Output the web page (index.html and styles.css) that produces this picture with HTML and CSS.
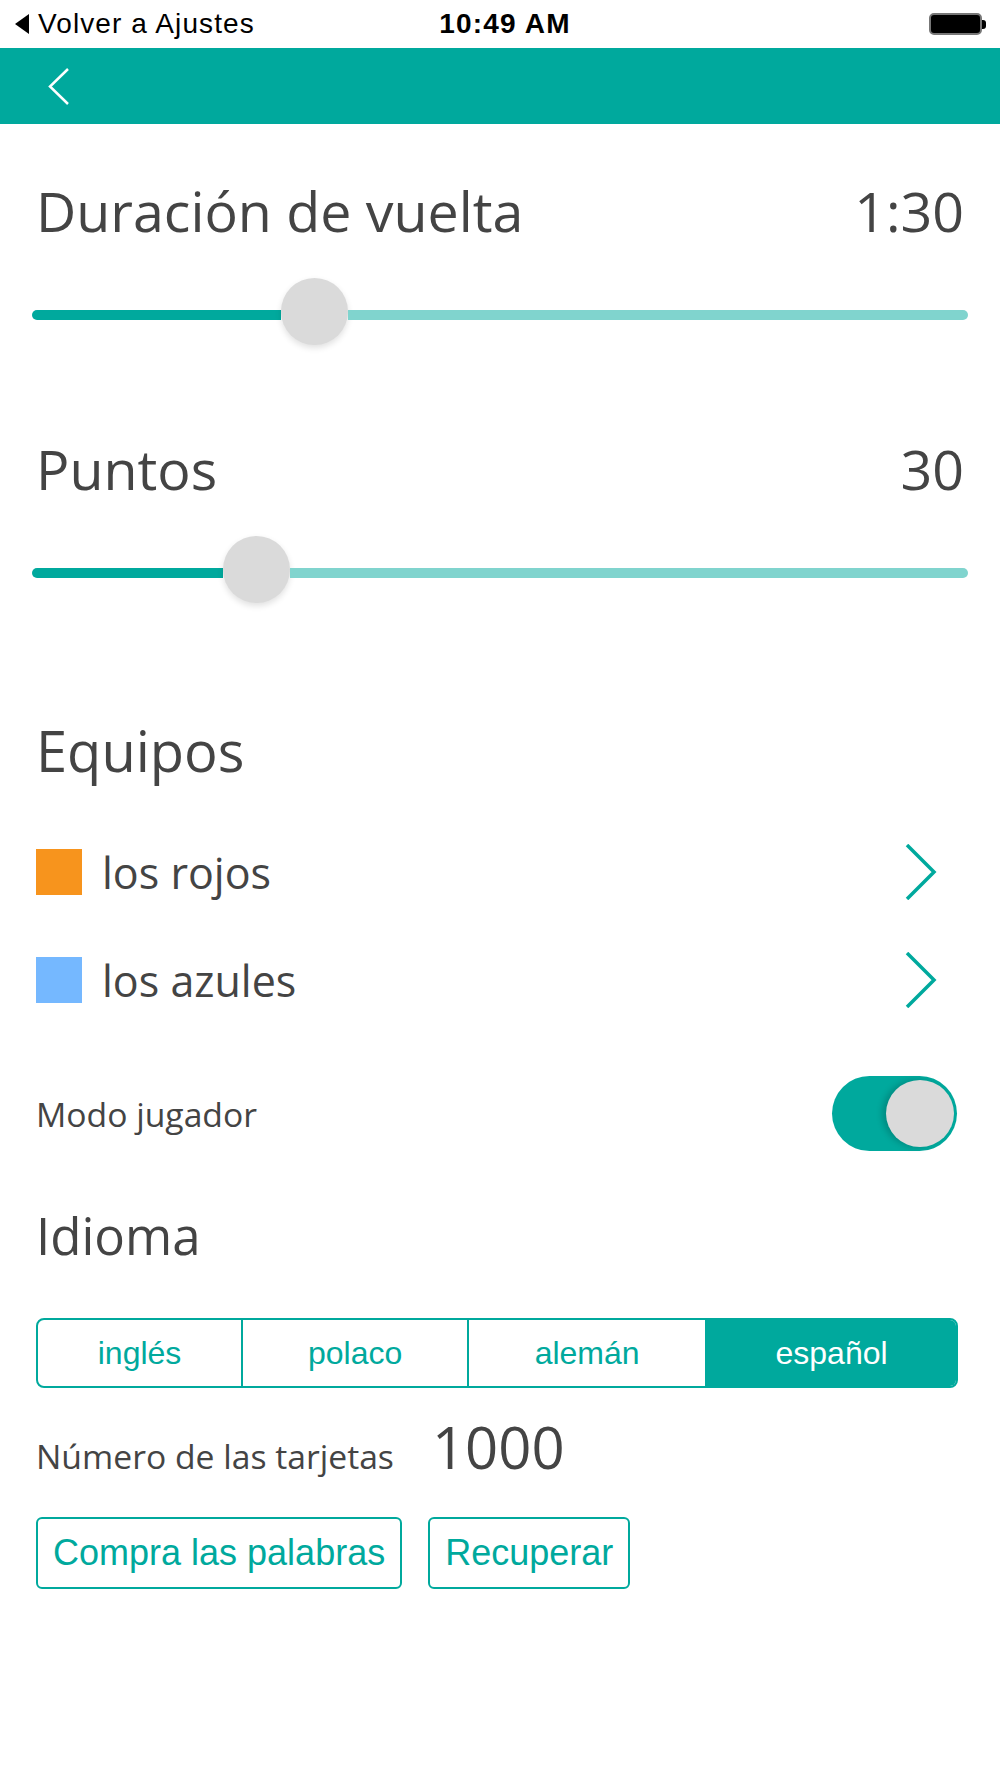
FILE: index.html
```html
<!DOCTYPE html>
<html lang="es">
<head>
  <meta charset="UTF-8">
  <title>Ajustes del juego</title>
  <meta name="viewport" content="width=device-width, initial-scale=1">
  <link rel="stylesheet" href="styles.css">
</head>
<body>
  <div class="statusbar">
    <div class="status-back">
      <svg class="status-tri" width="14" height="20" viewBox="0 0 14 20"><polygon points="14,0 14,20 0,10" fill="#000"/></svg>
      <span>Volver a Ajustes</span>
    </div>
    <div class="status-time">10:49 AM</div>
    <div class="status-right">
      <div class="battery"><div class="battery-body"></div><div class="battery-nub"></div></div>
    </div>
  </div>

  <div class="navbar">
    <svg width="22" height="37" viewBox="0 0 22 37"><polyline points="20,1 2,18.5 20,36" fill="none" stroke="#fff" stroke-width="2.5"/></svg>
  </div>

  <div class="content">
    <div class="setting">
      <div class="setting-head">
        <span>Duración de vuelta</span>
        <span>1:30</span>
      </div>
      <div class="slider">
        <div class="slider-fill" style="width:249px"></div>
        <div class="slider-knob"></div>
        <div class="slider-rest"></div>
      </div>
    </div>

    <div class="setting setting-second">
      <div class="setting-head">
        <span>Puntos</span>
        <span>30</span>
      </div>
      <div class="slider">
        <div class="slider-fill" style="width:191px"></div>
        <div class="slider-knob"></div>
        <div class="slider-rest"></div>
      </div>
    </div>

    <h3 class="title teams-title">Equipos</h3>
    <div class="team">
      <div class="team-color orange"></div>
      <span class="team-name">los rojos</span>
      <svg class="team-arrow" width="32" height="56" viewBox="0 0 32 56"><polyline points="2,1 29,28 2,55" fill="none" stroke="#00a99d" stroke-width="3.5"/></svg>
    </div>
    <div class="team">
      <div class="team-color blue"></div>
      <span class="team-name">los azules</span>
      <svg class="team-arrow" width="32" height="56" viewBox="0 0 32 56"><polyline points="2,1 29,28 2,55" fill="none" stroke="#00a99d" stroke-width="3.5"/></svg>
    </div>

    <div class="toggle-row">
      <span class="small-label">Modo jugador</span>
      <div class="toggle"><div class="toggle-knob"></div></div>
    </div>

    <h3 class="title lang-title">Idioma</h3>
    <div class="segmented">
      <div class="segment">inglés</div>
      <div class="segment">polaco</div>
      <div class="segment">alemán</div>
      <div class="segment active">español</div>
    </div>

    <div class="cards-row">
      <span class="small-label">Número de las tarjetas</span>
      <span class="cards-count">1000</span>
    </div>

    <div class="buttons">
      <button class="outline-btn">Compra las palabras</button>
      <button class="outline-btn">Recuperar</button>
    </div>
  </div>
</body>
</html>
```

FILE: styles.css
```css
body { margin: 0; background: #fff; font-family: "Open Sans", sans-serif; color: #444; }

.statusbar { height: 48px; display: grid; grid-template-columns: 1fr auto 1fr; align-items: center; font-family: "Liberation Sans", Arial, sans-serif; color: #000; }
.status-back { display: flex; align-items: center; padding-left: 15px; font-size: 28px; letter-spacing: 1.1px; }
.status-tri { margin-right: 9px; }
.status-time { font-size: 28px; font-weight: bold; letter-spacing: 1.2px; padding-left: 10px; }
.status-right { display: flex; justify-content: flex-end; padding-right: 14px; }
.battery { display: flex; align-items: center; }
.battery-body { width: 49px; height: 18px; background: #000; border: 2px solid #777; border-radius: 5px; }
.battery-nub { width: 4px; height: 9px; background: #000; border-radius: 0 3px 3px 0; }

.navbar { height: 76px; background: #00a99d; display: flex; align-items: center; padding-left: 48px; }

.content { padding: 55px 36px 0 36px; }

.setting-head { display: flex; justify-content: space-between; font-size: 55.5px; line-height: 64px; }
.setting-second { margin-top: 89px; }

.slider { display: flex; align-items: center; height: 67px; margin: 38px -4px 0 -4px; }
.slider-fill { height: 10px; background: #00a99d; border-radius: 5px 0 0 5px; }
.slider-knob { width: 67px; height: 67px; border-radius: 50%; background: #dadada; margin-bottom: 6px; box-shadow: 0 3px 6px rgba(0,0,0,0.12); }
.slider-rest { flex: 1; height: 10px; background: #80d4ce; border-radius: 0 5px 5px 0; }

.title { margin: 0; font-size: 56px; line-height: 64px; font-weight: normal; }
.teams-title { margin-top: 112px; margin-bottom: 36px; }

.team { display: flex; align-items: center; height: 108px; margin-right: 6px; }
.team-color { width: 46px; height: 46px; margin-right: 20px; }
.orange { background: #f7941d; }
.blue { background: #75b8ff; }
.team-name { flex: 1; font-size: 43px; line-height: 54px; margin-top: 2px; }
.team-arrow { margin-right: 21px; }

.toggle-row { display: flex; justify-content: space-between; align-items: center; margin-top: 42px; margin-right: 6px; }
.small-label { font-size: 33.7px; }
.toggle { width: 125px; height: 75px; border-radius: 38px; background: #00a99d; display: flex; align-items: center; justify-content: flex-end; padding-right: 3px; box-sizing: border-box; margin-right: 1px; }
.toggle-knob { width: 68px; height: 67px; border-radius: 50%; background: #dadada; box-shadow: -4px 0 6px rgba(0,0,0,0.18); }

.title.lang-title { margin-top: 52px; font-size: 51px; }

.segmented { display: grid; grid-template-columns: 204fr 227fr 239fr 252fr; height: 70px; margin: 51px 6px 0 0; border: 2px solid #00a99d; border-radius: 8px; box-sizing: border-box; overflow: hidden; font-family: "Liberation Sans", Arial, sans-serif; font-size: 32px; color: #00a99d; }
.segment { display: flex; align-items: center; justify-content: center; border-left: 2px solid #00a99d; }
.segment:first-child { border-left: none; }
.segment.active { background: #00a99d; color: #fff; }

.cards-row { display: flex; align-items: baseline; gap: 38px; margin-top: 23px; line-height: 72px; }
.cards-count { font-size: 58px; }

.buttons { display: flex; gap: 26px; margin-top: 25px; }
.outline-btn { height: 72px; padding: 0 15px; background: #fff; border: 2px solid #00a99d; border-radius: 6px; color: #00a99d; font-family: "Liberation Sans", Arial, sans-serif; font-size: 36px; }
```
